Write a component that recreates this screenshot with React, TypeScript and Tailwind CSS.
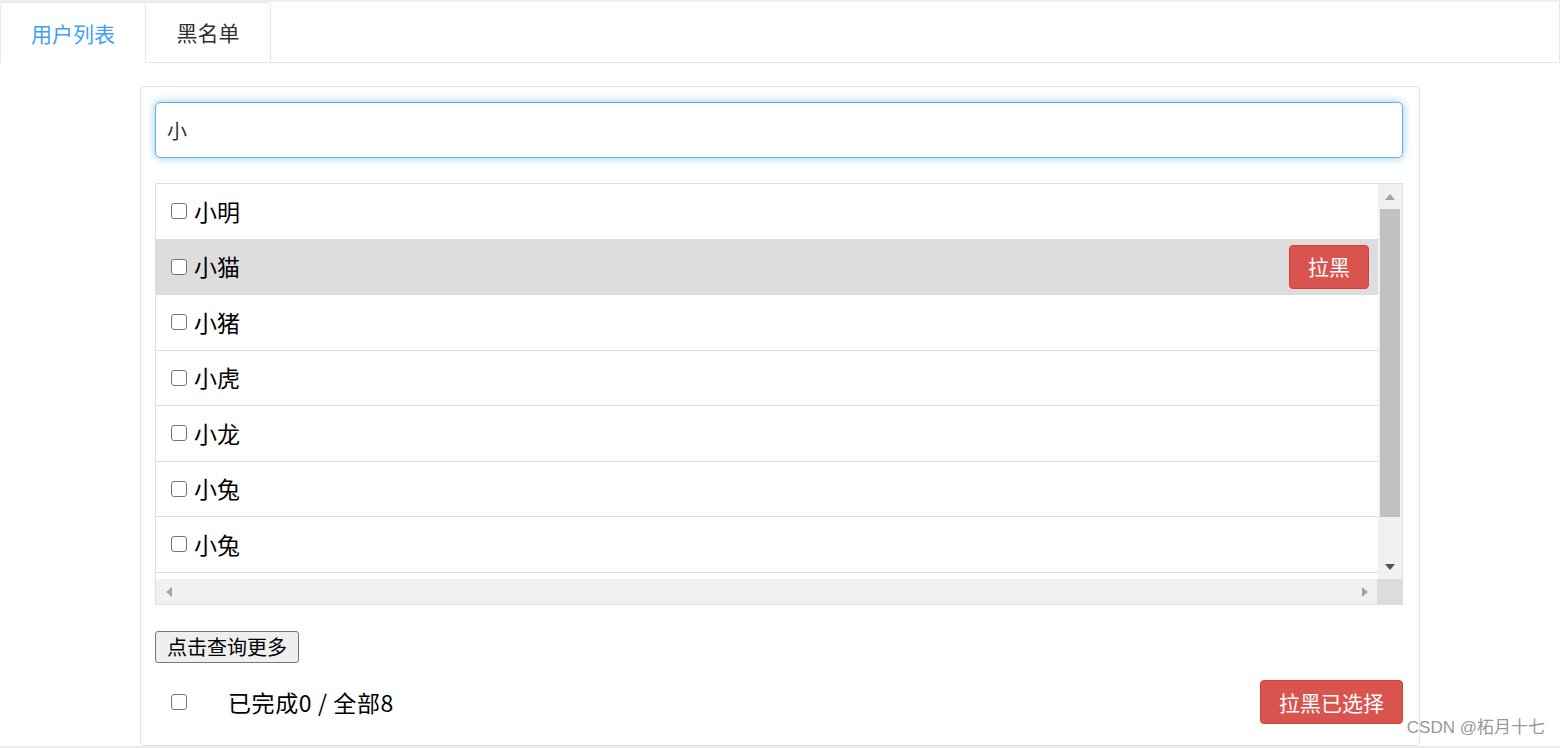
import React from "react";

function Check() {
  return (
    <input
      type="checkbox"
      readOnly
      className="appearance-none m-0 w-[16px] h-[16px] border border-[#767676] rounded-[3px] bg-white shrink-0"
    />
  );
}

function RedButton({ children }: { children: React.ReactNode }) {
  return (
    <button className="h-[44px] px-[18px] bg-[#d9534f] border border-[#d43f3a] rounded-[4px] text-white text-[21px] leading-none flex items-center">
      {children}
    </button>
  );
}

export default function App() {
  const names = ["小明", "小猫", "小猪", "小虎", "小龙", "小兔", "小兔", ""];
  return (
    <div className="relative w-[1560px] h-[748px] overflow-hidden bg-white font-['Noto_Sans_CJK_SC','Noto_Sans',sans-serif]">
      <div className="h-[2px] bg-[#eeeef3]" />
      {/* tabs header */}
      <div className="flex h-[61px] border-r border-[#e4e7ed]">
        <div className="flex border border-b-0 border-[#e4e7ed] rounded-t-[4px]">
          <div className="w-[144px] h-[60px] flex items-center justify-center text-[21px] leading-none text-[#409eff]">
            用户列表
          </div>
          <div className="w-[125px] h-[60px] flex items-center justify-center text-[21px] leading-none text-[#303133] border-l border-b border-[#e4e7ed]">
            黑名单
          </div>
        </div>
        <div className="flex-1 border-b border-[#e4e7ed]" />
      </div>

      {/* card */}
      <div className="mx-auto mt-[23px] w-[1280px] h-[660px] border border-[#e0e0e6] rounded-[5px] pl-[14px] pr-[16px] pt-[15px]">
        <input
          readOnly
          defaultValue="小"
          className="block w-full h-[56px] border border-[#66afe9] rounded-[5px] shadow-[0_0_9px_rgba(102,175,233,0.7)] pl-[11px] text-[20px] text-[#333] outline-none bg-white"
        />

        {/* list box */}
        <div className="mt-[25px] h-[422px] border border-[#ddd] flex flex-col">
          <div className="flex h-[395px]">
            <div className="flex-1 overflow-hidden">
              {names.map((n, i) => (
                <div
                  key={i}
                  className={
                    "h-[55.5px] border-b border-[#ddd] flex items-center pl-[15px] pr-[9px] " +
                    (i === 1 ? "bg-[#dddddd]" : "bg-white")
                  }
                >
                  {n && <Check />}
                  {n && <span className="ml-[7px] text-[23px] leading-none text-black">{n}</span>}
                  {i === 1 && (
                    <div className="ml-auto">
                      <RedButton>拉黑</RedButton>
                    </div>
                  )}
                </div>
              ))}
            </div>
            <div className="w-[24px] bg-[#f1f1f1] flex flex-col">
              <div className="h-[25px] flex items-center justify-center">
                <svg width="10" height="6" viewBox="0 0 10 6">
                  <polygon points="0,6 5,0 10,6" fill="#a3a3a3" />
                </svg>
              </div>
              <div className="h-[308px] mx-[2px] bg-[#c1c1c1]" />
              <div className="flex-1" />
              <div className="h-[25px] flex items-center justify-center">
                <svg width="10" height="6" viewBox="0 0 10 6">
                  <polygon points="0,0 10,0 5,6" fill="#505050" />
                </svg>
              </div>
            </div>
          </div>
          <div className="flex h-[25px]">
            <div className="flex-1 bg-[#f1f1f1] flex items-center justify-between">
              <div className="w-[25px] flex items-center justify-center">
                <svg width="6" height="10" viewBox="0 0 6 10">
                  <polygon points="6,0 6,10 0,5" fill="#a3a3a3" />
                </svg>
              </div>
              <div className="w-[25px] flex items-center justify-center">
                <svg width="6" height="10" viewBox="0 0 6 10">
                  <polygon points="0,0 6,5 0,10" fill="#a3a3a3" />
                </svg>
              </div>
            </div>
            <div className="w-[25px] bg-[#dcdcdc]" />
          </div>
        </div>

        <button className="mt-[26px] h-[32px] px-[11px] border border-[#767676] rounded-[3px] bg-[#efefef] text-[20px] leading-none text-black">
          点击查询更多
        </button>

        <div className="mt-[17px] h-[44px] flex items-center pl-[16px]">
          <Check />
          <span className="ml-[41px] text-[23px] tracking-[0.6px] leading-none text-black">已完成0 / 全部8</span>
          <div className="ml-auto">
            <RedButton>拉黑已选择</RedButton>
          </div>
        </div>
      </div>

      <div className="h-[2px] bg-[#ececec]" />

      <div className="absolute right-[15px] top-[719px] text-[17px] leading-none text-[#999] font-['Liberation_Sans','Noto_Sans_CJK_SC',sans-serif]">
        CSDN @柘月十七
      </div>
    </div>
  );
}
